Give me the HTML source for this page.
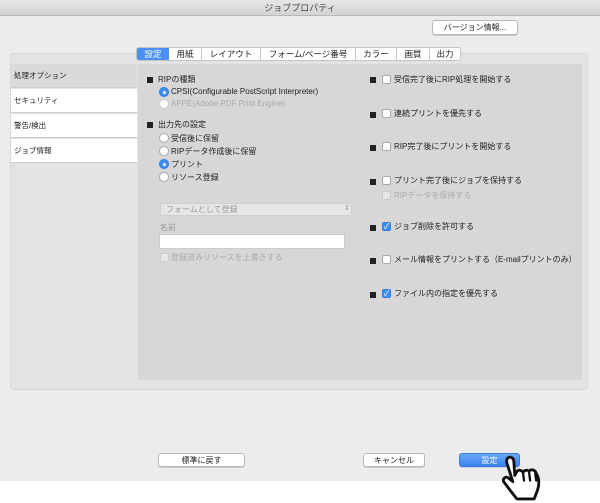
<!DOCTYPE html>
<html><head><meta charset="utf-8"><style>
*{box-sizing:border-box;margin:0;padding:0}
body{width:600px;height:503px;background:#fff;position:relative;overflow:hidden;font-family:"Liberation Sans","Noto Sans CJK JP",sans-serif;font-size:8px;color:#222}
.a{position:absolute}
.win{left:0;top:0;width:600px;height:481px;background:#ececec}
.title{left:0;top:0;width:600px;height:16px;background:linear-gradient(#e8e8e8,#d3d3d3);border-bottom:1px solid #b8b8b8;text-align:center;line-height:16px;font-size:9px;color:#444}
.btn{background:#fff;border:1px solid #b9b9b9;border-radius:3px;text-align:center;font-size:8px;line-height:13px;box-shadow:0 1px 0 #ccc}
.outer{left:10px;top:53px;width:578px;height:337px;background:#e3e3e3;border:1px solid #d8d8d8;border-radius:3px}
.inner{left:138px;top:64px;width:444px;height:316px;background:#d7d7d7;border-radius:2px}
.tabs{left:136px;top:47px;height:14px;display:flex;background:#fff;border:1px solid #c4c4c4;border-radius:3px;overflow:hidden}
.tabs div{height:100%;line-height:13px;font-size:8.5px;text-align:center;border-left:1px solid #c8c8c8}
.side div{position:absolute;left:11px;width:126px;height:24px;background:#fff;border-bottom:1px solid #ccc;line-height:24px;padding-left:3px;font-size:7.5px}
.sq{width:6px;height:6px;background:#222}
.rad{width:10px;height:10px;border-radius:50%;background:#fff;border:1px solid #aaa}
.rad.on{background:#3d8ef5;border-color:#2f7de0}
.rad.on:after{content:"";position:absolute;left:3px;top:3px;width:3px;height:3px;background:#fff;border-radius:50%}
.cb{width:9px;height:9px;background:#fff;border:1px solid #aaa;border-radius:2px}
.cb.on{background:#3d8ef5;border-color:#2f7de0;color:#fff;font-size:8px;line-height:7px;text-align:center}
.t{font-size:8px;white-space:nowrap}
.g{color:#aaa}
</style></head><body>
<div class="a win"></div>
<div class="a title">ジョブプロパティ</div>
<div class="a btn" style="left:432px;top:20px;width:86px;height:15px">バージョン情報...</div>
<div class="a outer"></div>
<div class="a inner"></div>
<div class="a tabs">
<div style="width:32px;border:0;background:#4a90f0;color:#fff">設定</div>
<div style="width:32px;border:0">用紙</div>
<div style="width:59px">レイアウト</div>
<div style="width:95px">フォーム/ページ番号</div>
<div style="width:41px">カラー</div>
<div style="width:33px">画質</div>
<div style="width:31px">出力</div>
</div>
<div class="side">
<div style="top:64px;background:#dadada">処理オプション</div>
<div style="top:89px">セキュリティ</div>
<div style="top:114px">警告/検出</div>
<div style="top:139px">ジョブ情報</div>
</div>

<div class="a sq" style="left:147px;top:77px"></div><div class="a t" style="left:158px;top:74px">RIPの種類</div>
<div class="a rad on" style="left:159px;top:87px"></div><div class="a t" style="left:171px;top:87px">CPSI(Configurable PostScript Interpreter)</div>
<div class="a rad" style="left:159px;top:99px;border-color:#ccc"></div><div class="a t g" style="left:171px;top:99px">APPE(Adobe PDF Print Engine)</div>
<div class="a sq" style="left:147px;top:122px"></div><div class="a t" style="left:158px;top:119px">出力先の設定</div>
<div class="a rad" style="left:159px;top:133px"></div><div class="a t" style="left:171px;top:133px">受信後に保留</div>
<div class="a rad" style="left:159px;top:146px"></div><div class="a t" style="left:171px;top:146px">RIPデータ作成後に保留</div>
<div class="a rad on" style="left:159px;top:159px"></div><div class="a t" style="left:171px;top:159px">プリント</div>
<div class="a rad" style="left:159px;top:172px"></div><div class="a t" style="left:171px;top:172px">リソース登録</div>
<div class="a" style="left:160px;top:203px;width:192px;height:13px;background:#e6e6e6;border:1px solid #cfcfcf;border-radius:3px"></div>
<div class="a t g" style="left:166px;top:204px;color:#999">フォームとして登録</div>
<div class="a t g" style="left:344px;top:204px;font-size:7px;color:#999">⇕</div>
<div class="a t g" style="left:160px;top:222px;color:#999">名前</div>
<div class="a" style="left:159px;top:234px;width:186px;height:15px;background:#fff;border:1px solid #ccc"></div>
<div class="a cb" style="left:160px;top:253px;border-color:#ccc;background:#e6e6e6"></div><div class="a t g" style="left:171px;top:252px">登録済みリソースを上書きする</div>

<div class="a sq" style="left:370px;top:77px"></div><div class="a cb" style="left:382px;top:75px"></div><div class="a t" style="left:394px;top:74px">受信完了後にRIP処理を開始する</div>
<div class="a sq" style="left:370px;top:112px"></div><div class="a cb" style="left:382px;top:109px"></div><div class="a t" style="left:394px;top:108px">連続プリントを優先する</div>
<div class="a sq" style="left:370px;top:145px"></div><div class="a cb" style="left:382px;top:142px"></div><div class="a t" style="left:394px;top:141px">RIP完了後にプリントを開始する</div>
<div class="a sq" style="left:370px;top:179px"></div><div class="a cb" style="left:382px;top:176px"></div><div class="a t" style="left:394px;top:175px">プリント完了後にジョブを保持する</div>
<div class="a cb" style="left:382px;top:191px;border-color:#ccc;background:#e6e6e6"></div><div class="a t g" style="left:394px;top:190px">RIPデータを保持する</div>
<div class="a sq" style="left:370px;top:225px"></div><div class="a cb on" style="left:382px;top:222px">✓</div><div class="a t" style="left:394px;top:221px">ジョブ削除を許可する</div>
<div class="a sq" style="left:370px;top:258px"></div><div class="a cb" style="left:382px;top:255px"></div><div class="a t" style="left:394px;top:254px">メール情報をプリントする（E-mailプリントのみ）</div>
<div class="a sq" style="left:370px;top:292px"></div><div class="a cb on" style="left:382px;top:289px">✓</div><div class="a t" style="left:394px;top:288px">ファイル内の指定を優先する</div>

<div class="a btn" style="left:158px;top:453px;width:87px;height:14px">標準に戻す</div>
<div class="a btn" style="left:363px;top:453px;width:62px;height:14px">キャンセル</div>
<div class="a btn" style="left:459px;top:453px;width:61px;height:14px;background:linear-gradient(#6aa8f8,#3a82ef);border-color:#3a7de0;color:#fff">設定</div>
<svg class="a" style="left:499px;top:454px" width="50" height="49" viewBox="0 0 48 48">
<path d="M8 4c3-2 6 0 6 3l1 14 2-4c2-2 5-1 6 1 1-2 4-3 6-1 1-2 4-2 6 0l2 4c2 4 2 10 0 15l-3 8H17l-7-9-6-8c-1-3 2-5 4-4l5 4L7 8c0-2 0-3 1-4z" fill="#fff" stroke="#111" stroke-width="2.8" stroke-linejoin="round"/>
<path d="M23 18l1 8M29 18l1 8M35 19l1 7" stroke="#111" stroke-width="2.3" fill="none" stroke-linecap="round"/>
</svg>
</body></html>
